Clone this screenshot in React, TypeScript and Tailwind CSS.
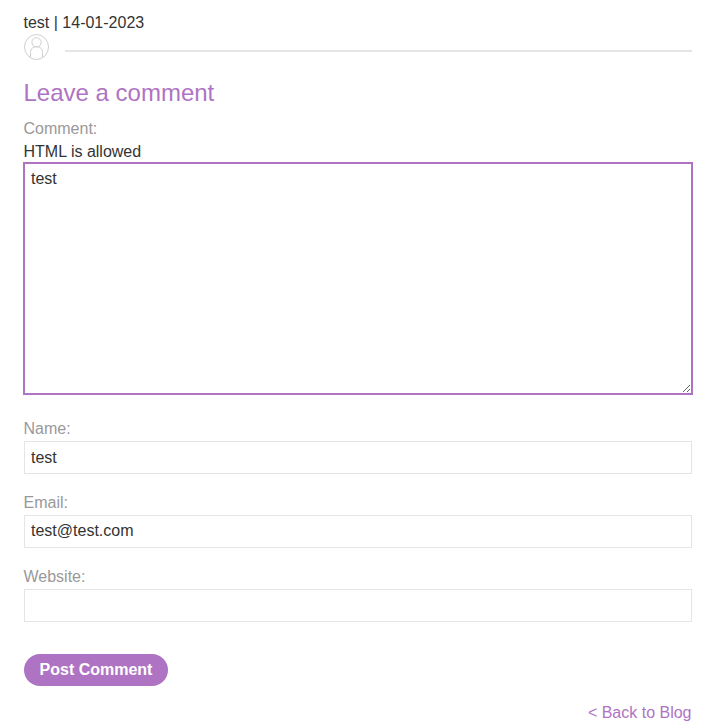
import React from "react";

function Field({ label, value, inset = "" }: { label: string; value: string; inset?: string }) {
  return (
    <div className="mb-[17px] h-[57px]">
      <label className="block h-6 leading-6 text-[#999]">{label}</label>
      <input
        defaultValue={value}
        className={`block h-[33px] w-full border border-[#e5e5e5] px-[6.5px] text-[#333] outline-none ${inset}`}
      />
    </div>
  );
}

export default function App() {
  return (
    <main
      className="h-[727px] overflow-hidden bg-white pr-6 pl-[23.5px] pt-[11px] text-base text-[#333]"
      style={{ fontFamily: '"Liberation Sans", Arial, sans-serif' }}
    >
      <div className="h-[23px] leading-[23px]">test | 14-01-2023</div>
      <div className="flex h-[26px]">
        <svg width="26" height="26" viewBox="0 0 26 26" fill="none" stroke="#cdd0cf" strokeWidth="1">
          <ellipse cx="12.5" cy="13" rx="12" ry="12.5" />
          <circle cx="12.5" cy="8.3" r="4.6" />
          <path d="M6.5 23.6V18.5C6.5 15 8.5 12.7 12.5 12.7S18.500 15 18.500 18.500V23.600" />
        </svg>
        <div className="mt-4 ml-[15.5px] h-0.5 flex-1 bg-[#e5e5e5]" />
      </div>
      <h2 className="mt-[19px] h-7 text-2xl leading-7 text-[#ae74c3]">Leave a comment</h2>
      <label className="mt-2.5 block h-[23px] leading-[23px] text-[#999]">Comment:</label>
      <div className="h-[22px] leading-[23px]">HTML is allowed</div>
      <textarea
        defaultValue="test"
        className="-ml-[0.5px] block h-[233px] w-[670px] resize-y border-2 border-[#ae74c3] px-1.5 py-[5px] leading-5 outline-none"
      />
      <div className="mt-[22px]">
        <Field label="Name:" value="test" />
        <Field label="Email:" value="test@test.com" inset="pb-0.5" />
        <Field label="Website:" value="" />
      </div>
      <button className="mt-8 block h-8 w-36 rounded-full bg-[#ae74c3] pl-px font-bold text-white">
        Post Comment
      </button>
      <div className="mt-[15px] pr-[0.5px] text-right leading-[23px] text-[#ae74c3]">&lt; Back to Blog</div>
    </main>
  );
}
